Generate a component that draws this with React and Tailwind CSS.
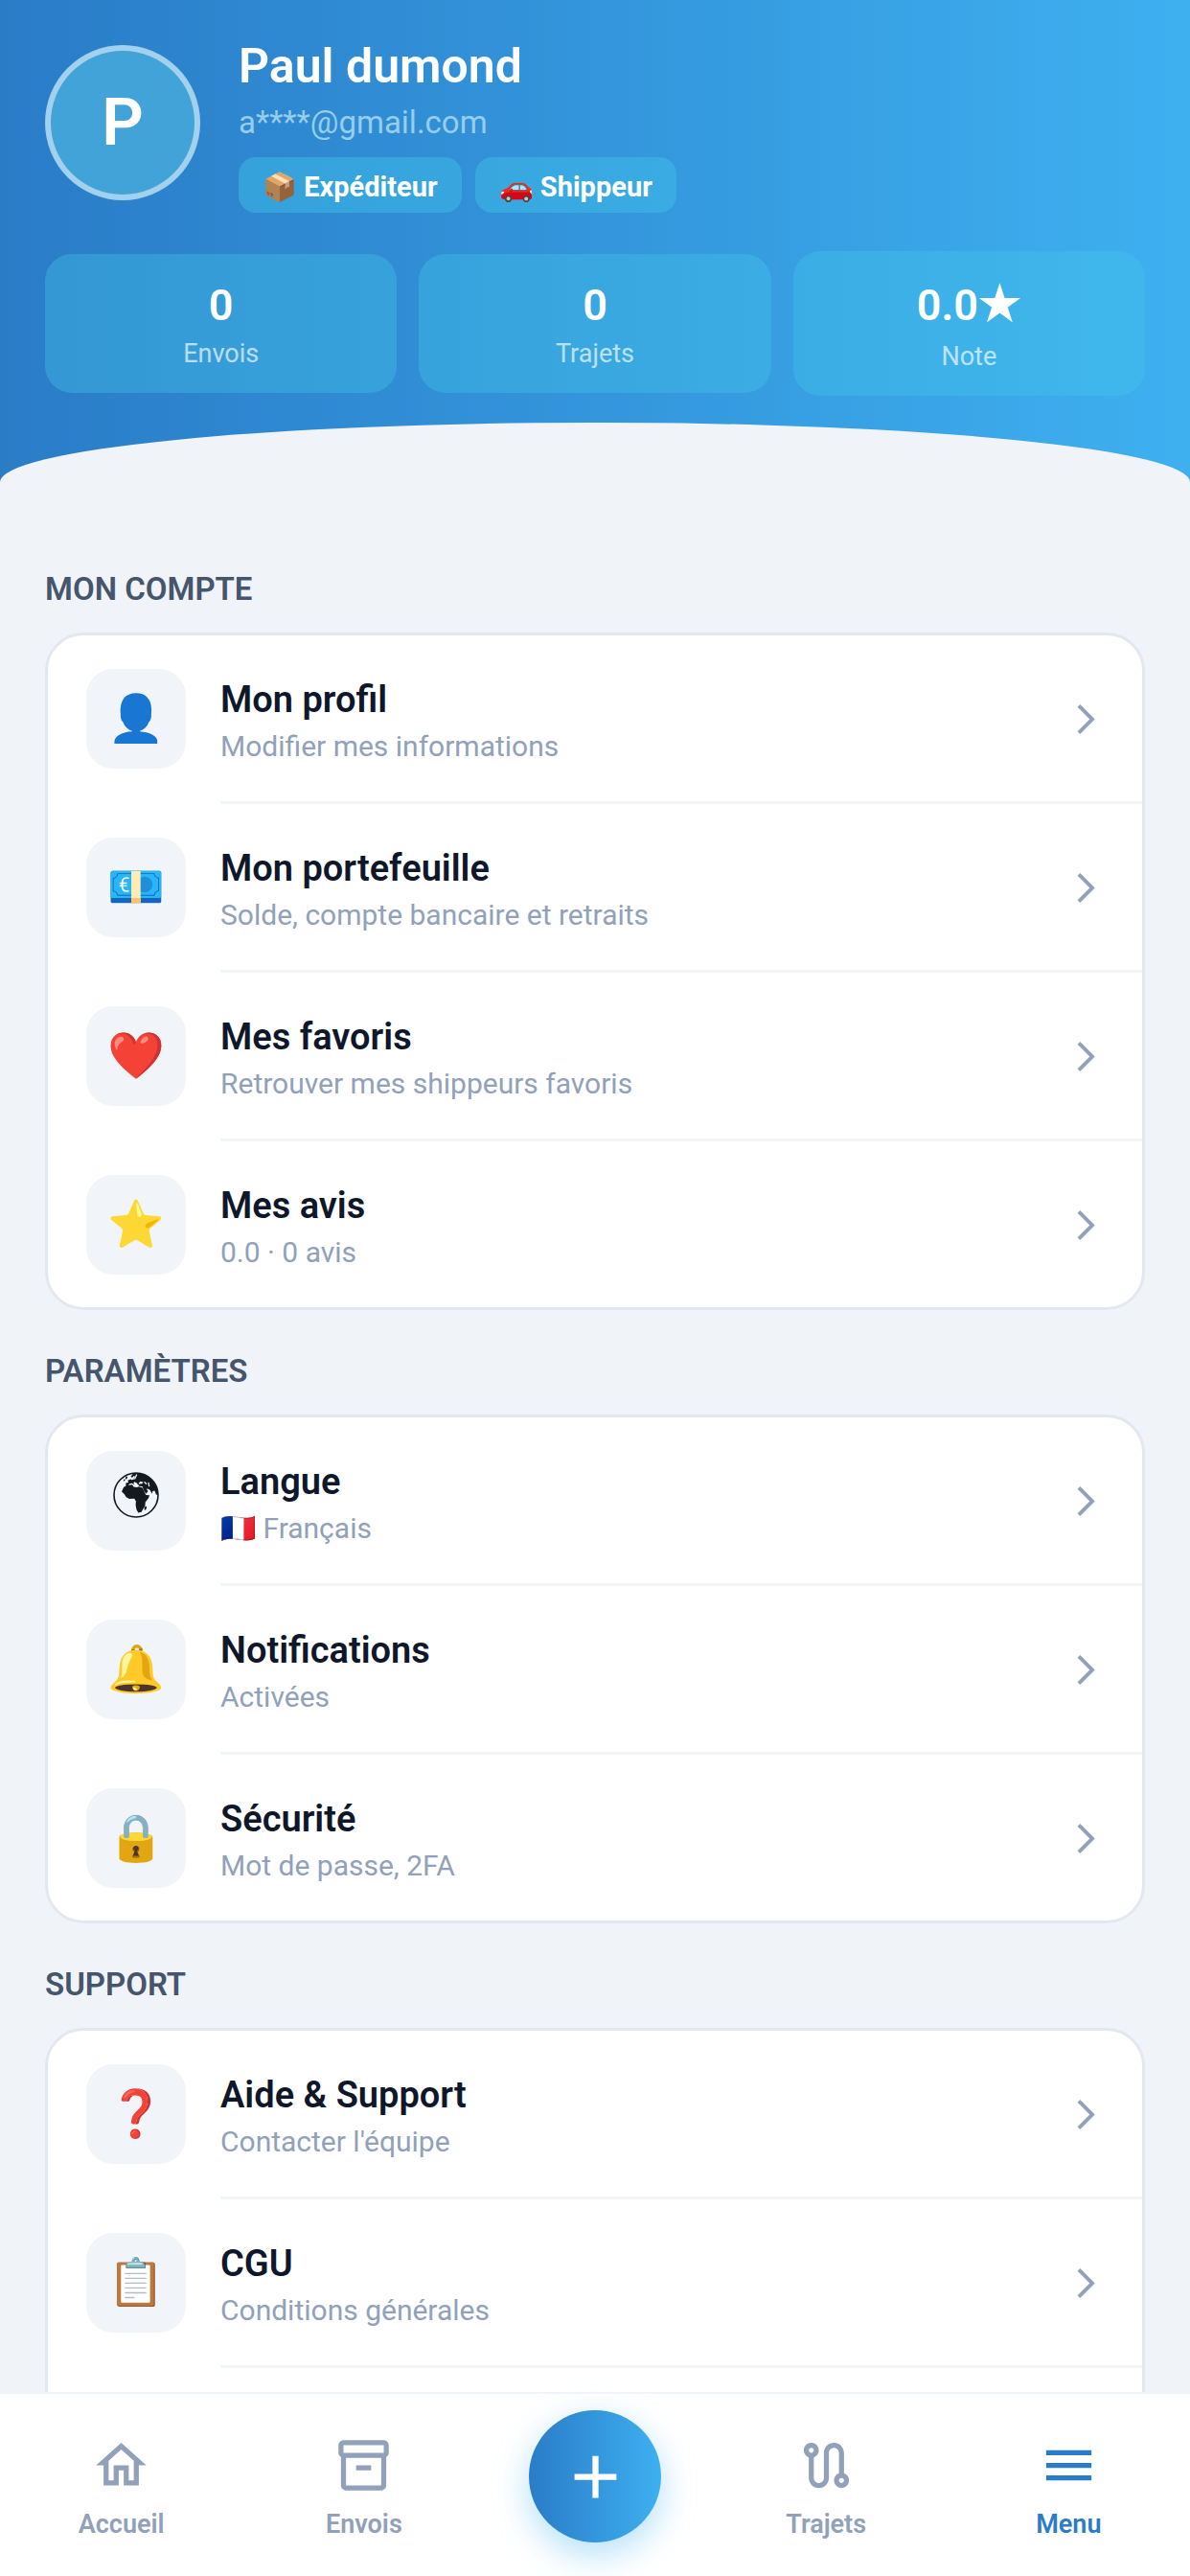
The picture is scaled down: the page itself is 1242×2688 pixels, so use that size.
import React, { useState } from 'react';
import clsx from 'clsx';
import {
  MdAdd,
  MdArrowForwardIos,
  MdMenu,
  MdOutlineHome,
  MdOutlineInventory2,
  MdOutlineRoute,
} from 'react-icons/md';

const GlobeIcon = () => (
  <svg viewBox="0 0 48 48" className="mb-3 size-12" aria-hidden="true">
    <circle cx="24" cy="24" r="23" fill="none" stroke="#14181f" strokeWidth="1.6" />
    <path
      fill="#14181f"
      d="M9 20.5 11 16l3-2 6-.8 1.5 2.3 3.5.5 1.5-.8 4 1 2 4.3 1.8 3.5 3.7.3-1 3-3.3 4.2-.3 4-2 3-1.8 3.2-3.3.7-1.8-3.2-.9-4.6.3-4.1-1.7-2.7-5.2.2-3.3-1.7-2-3.2z"
    />
    <path fill="#14181f" d="m34.5 35.5-1.8 1.6v2.5l1.2.2 1.3-2.8z" />
    <path
      fill="#14181f"
      d="M17.5 1.9 24 1c7 .2 13.5 3.5 17.5 8.5 3.7 4.5 5.5 9.5 5.5 15l-2.2-1.2-1.4-3.8-2 .6-.9 2.7-1.8-3.7-1.9-1.3-2.1-.3 1.8 2.5-2.1 2.7-2.5-3.5-1.3-4.1-3.4-.4-.6-2.1 3.6-.4 1.4-1.5-2.7-1-1.9 1.6-.5 2.7-1.7-2.5-2.4-1.2-1.2 1.1 1.5 2.4-2.8-2.1-2.7.5-1.6 2-2.3.2.1-3 2.7-.7-.8-2 3.3-1.3 2.4-.7 2.3-1.6-1.6-1.2-1.6 1.8-1.7-.8 2.3-3.2z"
    />
    <path
      fill="none"
      stroke="#f1f5f9"
      strokeWidth="1.3"
      strokeLinecap="round"
      d="m24.5 3-1.6 3.7-3.6 1M33 10.7l1.6 1.5M37 11.5l.6 3.2"
    />
    <path fill="#14181f" d="m13.5 4.5 1.7.4-.8 2.3-1.7.3zM11.5 7.5l1.2.5-.9 1.5-1 .1z" />
  </svg>
);

const roles = [
  { emoji: '📦', label: 'Expéditeur' },
  { emoji: '🚗', label: 'Shippeur' },
];

const sections = [
  {
    title: 'MON COMPTE',
    items: [
      { icon: '👤', title: 'Mon profil', subtitle: 'Modifier mes informations' },
      { icon: '💶', title: 'Mon portefeuille', subtitle: 'Solde, compte bancaire et retraits' },
      { icon: '❤️', title: 'Mes favoris', subtitle: 'Retrouver mes shippeurs favoris' },
      { icon: '⭐', title: 'Mes avis', subtitle: '0.0 · 0 avis' },
    ],
  },
  {
    title: 'PARAMÈTRES',
    items: [
      { icon: <GlobeIcon />, title: 'Langue', subtitle: '🇫🇷 Français' },
      { icon: '🔔', title: 'Notifications', subtitle: 'Activées' },
      { icon: '🔒', title: 'Sécurité', subtitle: 'Mot de passe, 2FA' },
    ],
  },
  {
    title: 'SUPPORT',
    items: [
      { icon: '❓', title: 'Aide & Support', subtitle: "Contacter l'équipe" },
      { icon: '📋', title: 'CGU', subtitle: 'Conditions générales' },
      { icon: '📄', title: 'Confidentialité', subtitle: 'Protection des données' },
    ],
  },
];

const Stat = ({ label, children }) => (
  <div className="flex-1 rounded-[28px] bg-[#46c8eb]/35 py-6 text-center">
    <div className="text-[45px] leading-[60px] font-semibold text-white">{children}</div>
    <div className="mt-[3px] text-[27px] leading-[34px] text-white/65">{label}</div>
  </div>
);

const Header = () => (
  <header className="bg-linear-to-r from-[#2a7cc7] to-[#3eb0f0]">
    <div className="px-[47px] pt-[34px]">
      <div className="flex items-center gap-10">
        <div className="flex size-[162px] items-center justify-center rounded-full border-6 border-white/50 bg-[#42a3d8] text-[68px] font-semibold text-white">
          P
        </div>
        <div>
          <h1 className="text-[50px] leading-[70px] font-semibold text-white">Paul dumond</h1>
          <p className="text-[33px] leading-[48px] text-[#96cdea]">a****@gmail.com</p>
          <div className="mt-3 flex gap-[14px]">
            {roles.map((role) => (
              <span
                key={role.label}
                className="rounded-[18px] bg-[#40c4e8]/45 px-[25px] pt-1 text-[29px] leading-[54px] font-bold text-white"
              >
                {role.emoji} {role.label}
              </span>
            ))}
          </div>
        </div>
      </div>

      <div className="mt-10 flex items-center gap-[23px]">
        <Stat label="Envois">0</Stat>
        <Stat label="Trajets">0</Stat>
        <Stat label="Note">
          <span className="block leading-[66px]">
            0.0<span className="text-[50px] leading-none">★</span>
          </span>
        </Stat>
      </div>
    </div>
    <div className="mt-7 h-[62px] rounded-t-[50%_100%] bg-[#f0f4f9]" />
  </header>
);

const MenuItem = ({ item, last }) => (
  <li>
    <button type="button" className="flex w-full items-center gap-9 px-10 pt-[35px] pb-[34px] text-left">
      <span className="flex size-[104px] shrink-0 items-center justify-center rounded-[28px] bg-[#f1f5f9] text-[48px] leading-none">
        {item.icon}
      </span>
      <span className="flex flex-1 flex-col gap-1">
        <span className="text-[38px] leading-[54px] font-semibold text-slate-900">{item.title}</span>
        <span className="text-[30px] leading-[36px] text-slate-400">{item.subtitle}</span>
      </span>
      <MdArrowForwardIos size={37} className="shrink-0 text-slate-400" />
    </button>
    {!last && <hr className="ml-[180px] border-t-3 border-slate-100" />}
  </li>
);

const Section = ({ section }) => (
  <section>
    <h2 className="text-[33px] leading-10 font-semibold text-slate-600">{section.title}</h2>
    <ul className="mt-[25px] overflow-hidden rounded-[40px] border-3 border-slate-200 bg-white">
      {section.items.map((item, index) => (
        <MenuItem key={item.title} item={item} last={index === section.items.length - 1} />
      ))}
    </ul>
  </section>
);

const Tab = ({ icon: Icon, label, active, onClick }) => (
  <button
    type="button"
    onClick={onClick}
    className={clsx(
      'mt-[43px] flex flex-1 flex-col items-center gap-3 text-[27px] leading-9 font-semibold',
      active ? 'text-[#2a7cc7]' : 'text-slate-400'
    )}
  >
    <Icon size={63} />
    {label}
  </button>
);

const App = () => {
  const [tab, setTab] = useState('Menu');

  return (
    <div className="flex h-screen flex-col bg-[#f0f4f9] font-[Roboto,sans-serif]">
      <main className="flex-1 overflow-y-auto [scrollbar-width:none]">
        <Header />
        <div className="flex flex-col gap-11 px-[47px] pt-[92px] pb-12">
          {sections.map((section) => (
            <Section key={section.title} section={section} />
          ))}
        </div>
      </main>

      <nav className="flex h-48 shrink-0 items-start border-t-2 border-slate-100 bg-white">
        <Tab icon={MdOutlineHome} label="Accueil" active={tab === 'Accueil'} onClick={() => setTab('Accueil')} />
        <Tab icon={MdOutlineInventory2} label="Envois" active={tab === 'Envois'} onClick={() => setTab('Envois')} />
        <div className="flex w-[229px] justify-center pt-[17px]">
          <button
            type="button"
            aria-label="Ajouter"
            className="flex size-[138px] items-center justify-center rounded-full bg-linear-to-r from-[#2a7cc7] to-[#3eb0f0] text-white shadow-[0_12px_36px_rgba(62,176,240,0.4)]"
          >
            <MdAdd size={75} />
          </button>
        </div>
        <Tab icon={MdOutlineRoute} label="Trajets" active={tab === 'Trajets'} onClick={() => setTab('Trajets')} />
        <Tab icon={MdMenu} label="Menu" active={tab === 'Menu'} onClick={() => setTab('Menu')} />
      </nav>
    </div>
  );
};

export default App;
